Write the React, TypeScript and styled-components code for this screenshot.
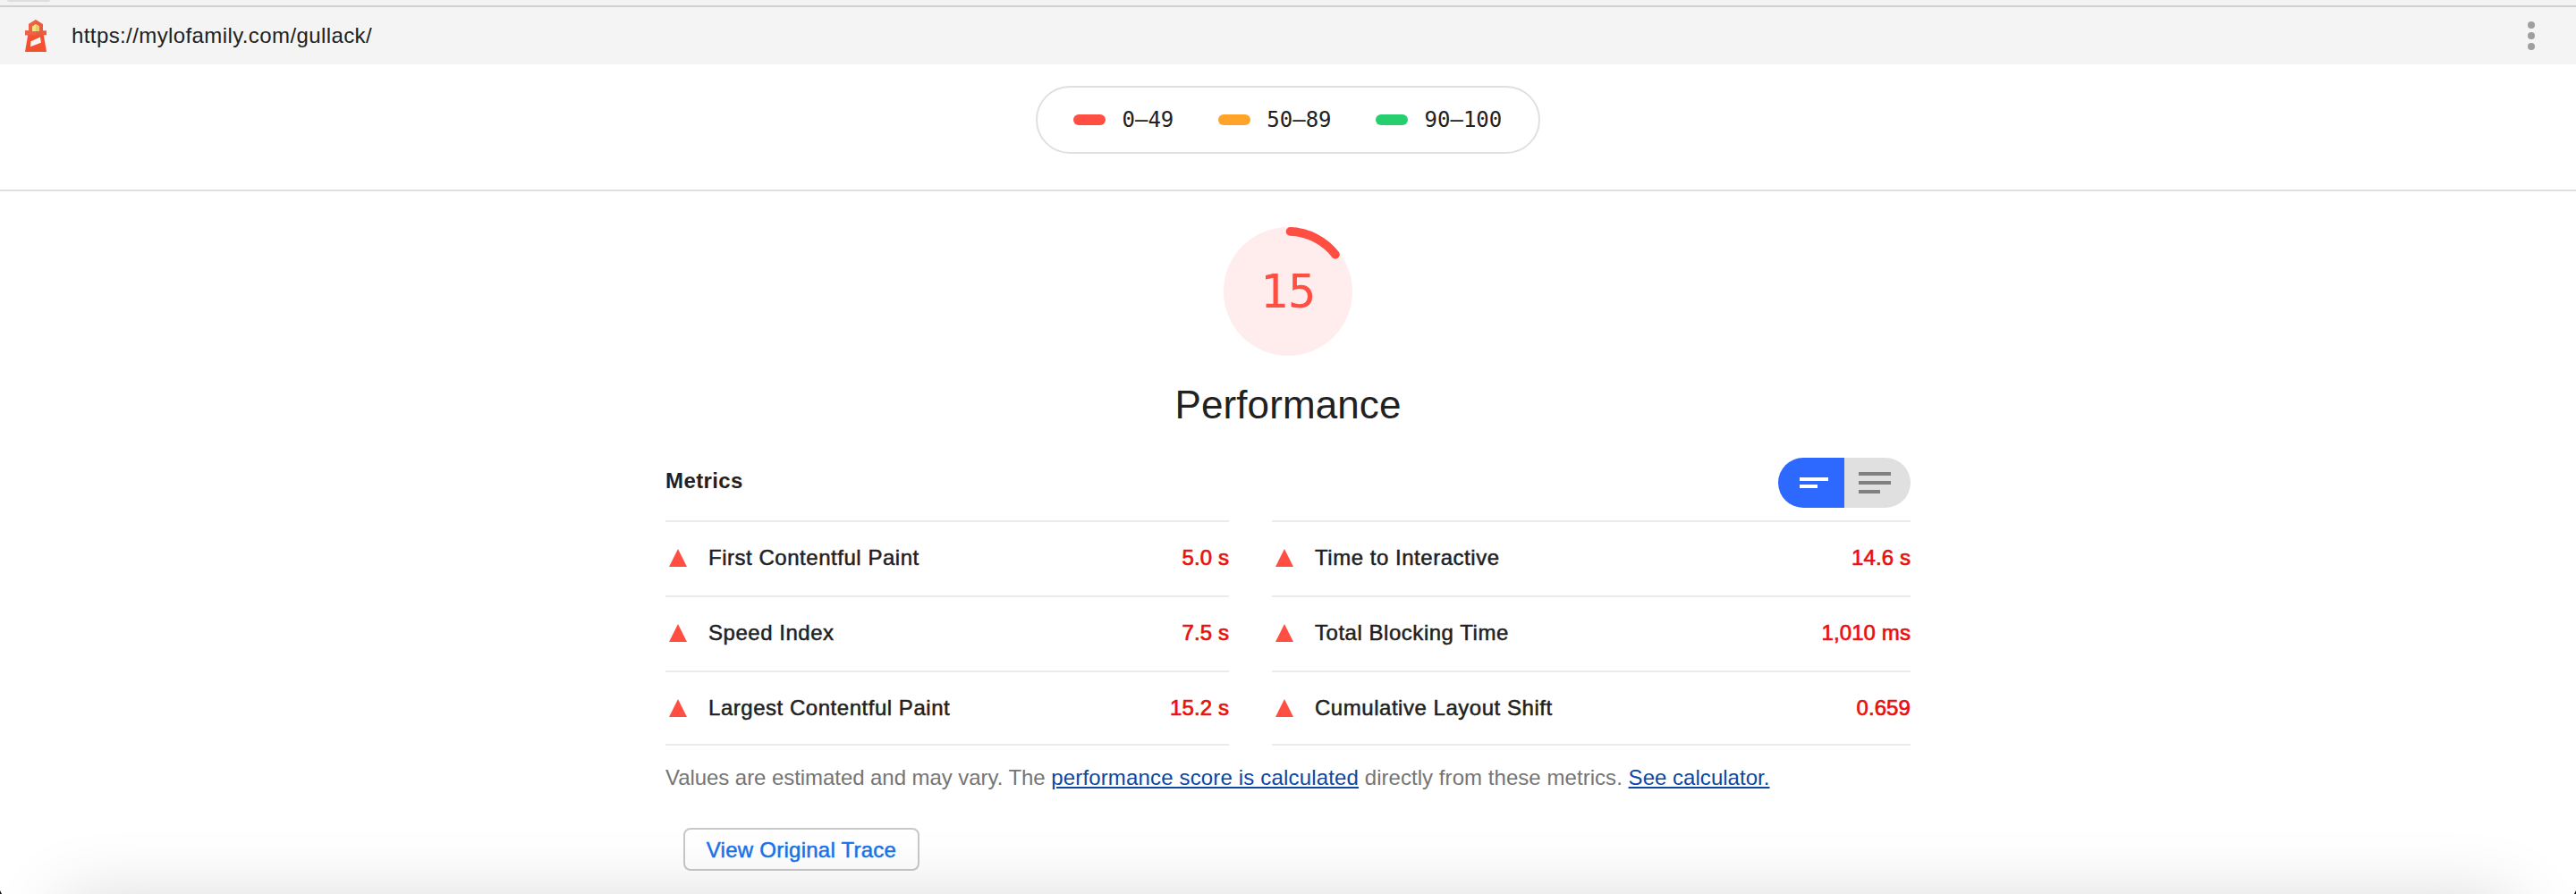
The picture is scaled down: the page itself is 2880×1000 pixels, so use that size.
import React from "react";
import styled, { createGlobalStyle } from "styled-components";

const GlobalStyle = createGlobalStyle`
  *, *::before, *::after { box-sizing: border-box; }
  body {
    margin: 0;
    background: #fff;
    color: #212121;
    font-family: "Liberation Sans", Arial, sans-serif;
    font-size: 24px;
    line-height: 32px;
  }
`;

const Page = styled.div`
  position: relative;
  display: flex;
  flex-direction: column;
  height: 1000px;
  overflow: hidden;
`;

const TabStrip = styled.div`
  height: 8px;
  padding-left: 8px;
  background: #f3f3f3;
  border-bottom: 2px solid #cfcfcf;
`;

const TabEdge = styled.div`
  width: 48px;
  height: 2px;
  background: #dedede;
  border-radius: 0 0 2px 2px;
`;

const Topbar = styled.header`
  display: flex;
  align-items: center;
  height: 64px;
  padding: 0 46px 0 28px;
  background: #f4f4f4;
`;

const Url = styled.span`
  flex: 1;
  margin-left: 28px;
  letter-spacing: 0.4px;
`;

const LegendBar = styled.div`
  display: flex;
  justify-content: center;
  height: 142px;
  padding-top: 24px;
  border-bottom: 2px solid #e0e0e0;
`;

const Legend = styled.div`
  display: flex;
  align-items: center;
  gap: 49.5px;
  width: 564px;
  height: 76px;
  padding: 0 40px;
  border: 2px solid #e0e0e0;
  border-radius: 38px;
`;

const LegendItem = styled.span<{ $color: string }>`
  display: flex;
  flex: none;
  align-items: center;
  gap: 18.5px;
  font-family: "DejaVu Sans Mono", monospace;

  &::before {
    content: "";
    width: 36px;
    height: 12px;
    border-radius: 6px;
    background: ${(p) => p.$color};
  }
`;

const Category = styled.main`
  display: flex;
  flex-direction: column;
  width: 1392px;
  margin: 0 auto;
  padding-top: 40px;
`;

const Gauge = styled.div`
  display: grid;
  place-items: center;
  align-self: center;
  width: 144px;
  height: 144px;

  & > * { grid-area: 1 / 1; }
`;

const Score = styled.span`
  color: #ff4e42;
  font-family: "DejaVu Sans Mono", monospace;
  font-size: 52px;
  line-height: 60px;
`;

const Title = styled.h1`
  margin: 29px 0 0;
  font-size: 44px;
  font-weight: 400;
  line-height: 52px;
  letter-spacing: 0.1px;
  text-align: center;
`;

const MetricsHeader = styled.div`
  display: flex;
  justify-content: space-between;
  height: 70px;
  margin-top: 33px;
`;

const MetricsTitle = styled.h2`
  margin: 10px 0 0;
  font-size: 24px;
  font-weight: 700;
  letter-spacing: 0.4px;
`;

const Toggle = styled.div`
  display: flex;
  width: 148px;
  height: 56px;
  border-radius: 28px;
  overflow: hidden;
`;

const ToggleHalf = styled.div<{ $active?: boolean }>`
  display: flex;
  flex: 0 0 74px;
  flex-direction: column;
  justify-content: center;
  gap: ${(p) => (p.$active ? 4 : 6)}px;
  padding-left: ${(p) => (p.$active ? 24 : 16)}px;
  background: ${(p) => (p.$active ? "#2e69ff" : "#e0e0e0")};
  color: ${(p) => (p.$active ? "#fff" : "#808080")};
`;

const Line = styled.span<{ $width: number }>`
  width: ${(p) => p.$width}px;
  height: 4px;
  background: currentColor;
`;

const Columns = styled.div`
  display: grid;
  grid-template-columns: 630px 714px;
  gap: 48px;
`;

const Column = styled.div`
  display: flex;
  flex-direction: column;
  gap: 2px;
  border-bottom: 2px solid #ebebeb;
`;

const Metric = styled.div`
  display: flex;
  align-items: center;
  height: 82px;
  padding-left: 4px;
  border-top: 2px solid #ebebeb;
`;

const MetricName = styled.span`
  flex: 1;
  margin-left: 24px;
  letter-spacing: 0.53px;
  -webkit-text-stroke: 0.5px currentColor;
`;

const MetricValue = styled.span`
  color: #eb0f0f;
  letter-spacing: 0.1px;
  -webkit-text-stroke: 0.7px currentColor;
`;

const Description = styled.p`
  margin: 20px 0 0;
  color: #757575;
  white-space: nowrap;
`;

const Phrase = styled.span<{ $tracking: number }>`
  letter-spacing: ${(p) => p.$tracking}px;
`;

const Link = styled.a<{ $tracking: number }>`
  color: #0c47a1;
  letter-spacing: ${(p) => p.$tracking}px;
  text-decoration: underline;
  text-decoration-thickness: 2px;
  text-underline-offset: 2px;
`;

const TraceButton = styled.button`
  align-self: flex-start;
  width: 264px;
  height: 48px;
  margin: 40px 0 0 20px;
  padding: 2px 0 0;
  border: 2px solid #c8c8c8;
  border-radius: 8px;
  background: transparent;
  color: #1a73e8;
  font: 24px/32px "Liberation Sans", Arial, sans-serif;
  letter-spacing: 0.25px;
  -webkit-text-stroke: 0.5px currentColor;
`;

const BottomShade = styled.div`
  position: absolute;
  top: 1008px;
  left: 70px;
  right: 70px;
  height: 100px;
  box-shadow: 0 0 80px rgba(0, 0, 0, 0.17);
`;

const WindowCorner = styled.div<{ $side: "left" | "right" }>`
  position: absolute;
  bottom: 0;
  ${(p) => p.$side}: 0;
  width: 2px;
  height: 4px;
  background: #111;
  clip-path: ${(p) =>
    p.$side === "left"
      ? "polygon(0 0, 100% 100%, 0 100%)"
      : "polygon(100% 0, 100% 100%, 0 100%)"};
`;

const LighthouseLogo = () => (
  <svg width="24" height="36" viewBox="0 0 24 36">
    <path fill="#f4502f" d="M3.2 17h17.6L24 36H0z" />
    <path fill="#e85c41" d="M12 0l8 5v7.2h4v5H0v-5h4V5z" />
    <path fill="#ee6248" d="M12 0v17.2H0v-5h4V5z" />
    <path fill="#f3e37c" d="M12 5l4 2.6V13H8V7.6z" />
    <path fill="#ded070" d="M12 5l4 2.6V13h-4z" />
    <path fill="#f4f4f4" d="M6.5 24.2L17 19.6l.9 6.2L6 30.3z" />
  </svg>
);

const MenuDots = () => (
  <svg width="8" height="32" viewBox="0 0 8 32" fill="#9e9e9e">
    <circle cx="4" cy="4" r="4" />
    <circle cx="4" cy="16" r="4" />
    <circle cx="4" cy="28" r="4" />
  </svg>
);

const Triangle = () => (
  <svg width="20" height="20" viewBox="0 0 20 20">
    <path fill="#ff4e42" d="M10 0l10 20H0z" />
  </svg>
);

const GaugeArc = () => (
  <svg width="144" height="144" viewBox="0 0 144 144">
    <circle cx="72" cy="72" r="72" fill="#ffeded" />
    <path
      d="M74.5 4.9A67.2 67.2 0 0 1 125 30.7"
      fill="none"
      stroke="#ff4e42"
      strokeWidth="9.6"
      strokeLinecap="round"
    />
  </svg>
);

const legend = [
  { label: "0–49", color: "#ff4e42" },
  { label: "50–89", color: "#ffa428" },
  { label: "90–100", color: "#26ce6e" },
];

const metricColumns = [
  [
    ["First Contentful Paint", "5.0 s"],
    ["Speed Index", "7.5 s"],
    ["Largest Contentful Paint", "15.2 s"],
  ],
  [
    ["Time to Interactive", "14.6 s"],
    ["Total Blocking Time", "1,010 ms"],
    ["Cumulative Layout Shift", "0.659"],
  ],
];

export default function App() {
  return (
    <>
      <GlobalStyle />
      <Page>
        <TabStrip>
          <TabEdge />
        </TabStrip>
        <Topbar>
          <LighthouseLogo />
          <Url>https://mylofamily.com/gullack/</Url>
          <MenuDots />
        </Topbar>
        <LegendBar>
          <Legend>
            {legend.map((item) => (
              <LegendItem key={item.label} $color={item.color}>
                {item.label}
              </LegendItem>
            ))}
          </Legend>
        </LegendBar>
        <Category>
          <Gauge>
            <GaugeArc />
            <Score>15</Score>
          </Gauge>
          <Title>Performance</Title>
          <MetricsHeader>
            <MetricsTitle>Metrics</MetricsTitle>
            <Toggle>
              <ToggleHalf $active>
                <Line $width={32} />
                <Line $width={20} />
              </ToggleHalf>
              <ToggleHalf>
                <Line $width={36} />
                <Line $width={36} />
                <Line $width={24} />
              </ToggleHalf>
            </Toggle>
          </MetricsHeader>
          <Columns>
            {metricColumns.map((metrics, i) => (
              <Column key={i}>
                {metrics.map(([name, value]) => (
                  <Metric key={name}>
                    <Triangle />
                    <MetricName>{name}</MetricName>
                    <MetricValue>{value}</MetricValue>
                  </Metric>
                ))}
              </Column>
            ))}
          </Columns>
          <Description>
            <Phrase $tracking={-0.06}>
              Values are estimated and may vary. The{" "}
            </Phrase>
            <Link $tracking={0.16}>performance score is calculated</Link>
            <Phrase $tracking={0.05}> directly from these metrics. </Phrase>
            <Link $tracking={0.03}>See calculator.</Link>
          </Description>
          <TraceButton>View Original Trace</TraceButton>
        </Category>
        <BottomShade />
        <WindowCorner $side="left" />
        <WindowCorner $side="right" />
      </Page>
    </>
  );
}
